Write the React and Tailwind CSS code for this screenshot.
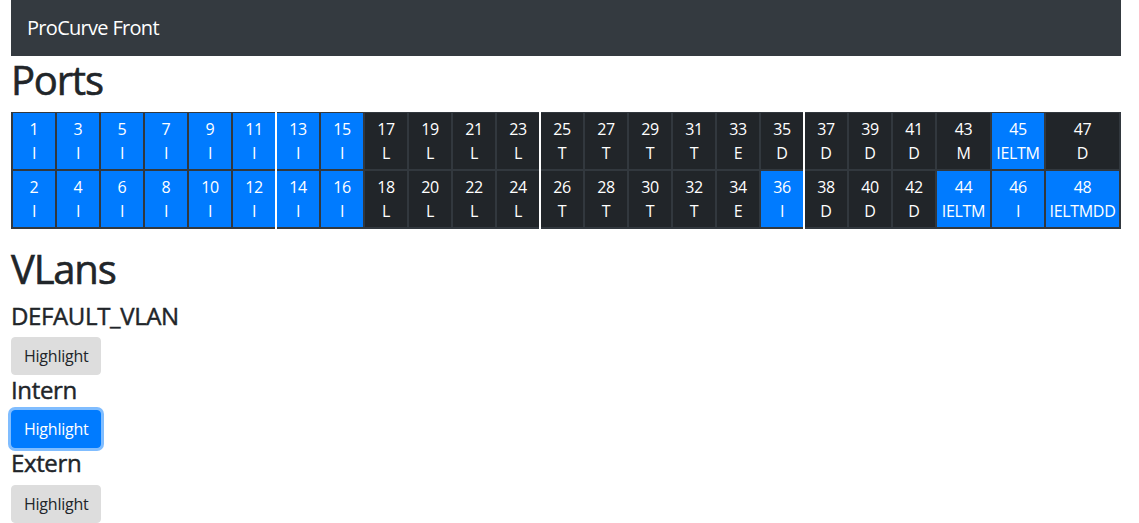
import React from "react";

const top = [
  ["1","I"],["3","I"],["5","I"],["7","I"],["9","I"],["11","I"],["13","I"],["15","I"],
  ["17","L"],["19","L"],["21","L"],["23","L"],["25","T"],["27","T"],["29","T"],["31","T"],
  ["33","E"],["35","D"],["37","D"],["39","D"],["41","D"],["43","M"],["45","IELTM"],["47","D"],
];
const bottom = [
  ["2","I"],["4","I"],["6","I"],["8","I"],["10","I"],["12","I"],["14","I"],["16","I"],
  ["18","L"],["20","L"],["22","L"],["24","L"],["26","T"],["28","T"],["30","T"],["32","T"],
  ["34","E"],["36","I"],["38","D"],["40","D"],["42","D"],["44","IELTM"],["46","I"],["48","IELTMDD"],
];

const colW = (i) => {
  if (i === 21) return "w-[53px]";
  if (i === 22) return "w-[52px]";
  if (i === 23) return "flex-1";
  return "w-[42px]";
};

function Cell({ p }) {
  const blue = p[1].includes("I");
  return (
    <div
      className={
        "h-[56px] py-[4px] flex flex-col items-center text-white text-[16px] leading-6 tracking-[-0.02em] " +
        (blue ? "bg-[#007bff]" : "bg-[#212529]")
      }
    >
      <span>{p[0]}</span>
      <span>{p[1]}</span>
    </div>
  );
}

function Highlight({ active }) {
  return (
    <button
      className={
        "h-[38px] px-3 rounded-[4px] text-[16px] leading-6 tracking-[-0.015em] border " +
        (active
          ? "bg-[#007bff] border-[#007bff] text-white ring-[3px] ring-[#80bdff]"
          : "bg-[#dddddd] border-[#dddddd] text-[#212529]")
      }
    >
      Highlight
    </button>
  );
}

export default function App() {
  const items = [];
  items.push(<div key="lb" className="w-[2px] bg-[#32383e]" />);
  top.forEach((p, i) => {
    items.push(
      <div key={"c" + i} className={"flex flex-col bg-[#32383e] pt-[1px] pb-[2px] gap-[2px] " + colW(i)}>
        <Cell p={p} />
        <Cell p={bottom[i]} />
      </div>
    );
    if (i < 23) {
      const white = i === 5 || i === 11 || i === 17;
      items.push(
        <div key={"d" + i} className={"w-[2px] " + (white ? "bg-white" : "bg-[#32383e]")} />
      );
    }
  });
  items.push(<div key="rb" className="w-[2px] bg-[#32383e]" />);

  const h1 = "text-[40px] leading-[48px] mb-2 font-normal tracking-[-0.03em] [-webkit-text-stroke:0.6px]";
  const h4 = "text-[24px] leading-[29px] font-normal tracking-[-0.015em] [-webkit-text-stroke:0.45px]";

  return (
    <div
      className="bg-white text-[#212529] min-h-[523px]"
      style={{ fontFamily: '"Open Sans", "Noto Sans", sans-serif' }}
    >
      <div className="ml-[11px] w-[1110px]">
        <nav className="h-[56px] bg-[#343a40] flex items-center px-4">
          <span className="text-white text-[20px] leading-[30px] tracking-[-0.035em]">ProCurve Front</span>
        </nav>
        <h1 className={h1}>Ports</h1>
        <div className="flex">{items}</div>
        <h1 className={h1 + " mt-4"}>VLans</h1>
        <div className="flex flex-col items-start">
          <h4 className={h4 + " mb-[7px]"}>DEFAULT_VLAN</h4>
          <Highlight />
          <h4 className={h4 + " mb-[6px]"}>Intern</h4>
          <Highlight active />
          <h4 className={h4 + " mb-[8px]"}>Extern</h4>
          <Highlight />
        </div>
      </div>
    </div>
  );
}
